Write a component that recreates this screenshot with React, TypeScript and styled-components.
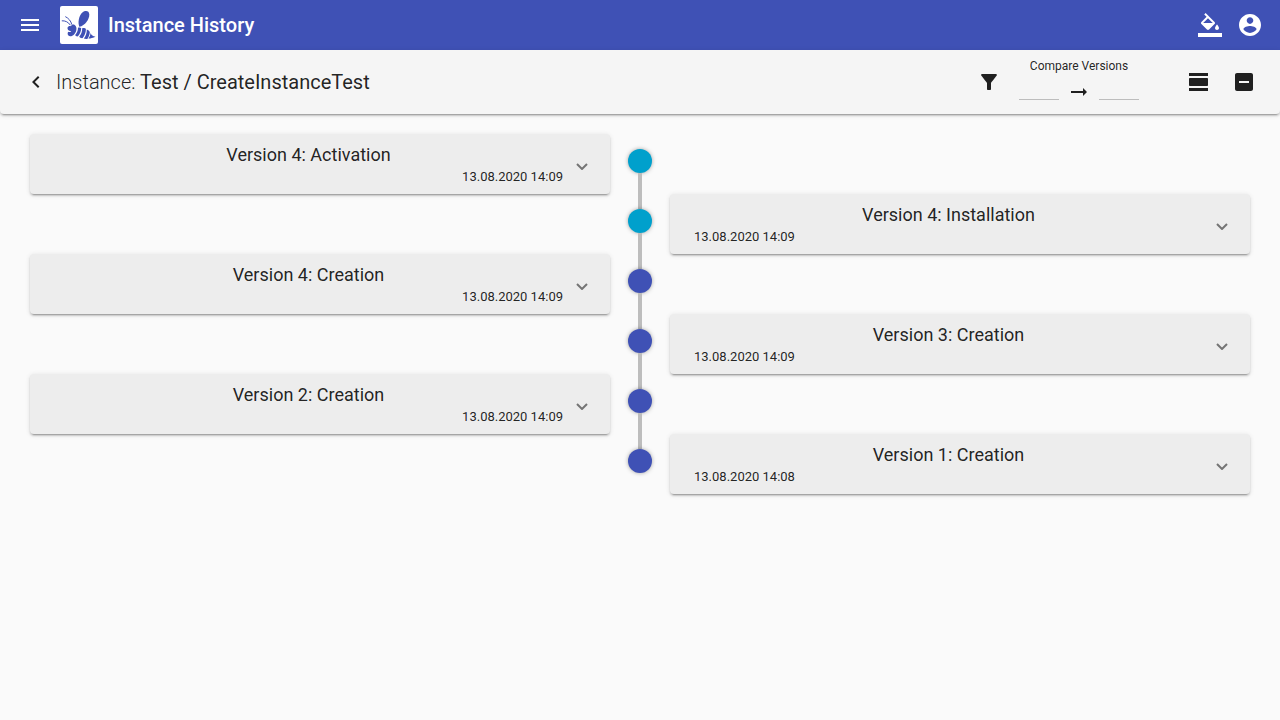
import React, { useState } from 'react';
import styled, { createGlobalStyle } from 'styled-components';

const GlobalStyle = createGlobalStyle`
  *, *::before, *::after { box-sizing: border-box; }
  body {
    margin: 0;
    background: #fafafa;
    color: rgba(0, 0, 0, 0.87);
    font-family: Roboto, "Liberation Sans", sans-serif;
  }
`;

const elevation = `0 3px 1px -2px rgba(0, 0, 0, 0.2), 0 2px 2px 0 rgba(0, 0, 0, 0.14),
    0 1px 5px 0 rgba(0, 0, 0, 0.12)`;

const AppBar = styled.header`
  display: flex;
  align-items: center;
  gap: 10px;
  height: 50px;
  padding: 0 10px;
  background: #3f51b5;
  color: #fff;
`;

const AppTitle = styled.h1`
  flex: 1;
  margin: 0;
  font-size: 20px;
  font-weight: 500;
  line-height: 24px;
`;

const Actions = styled.div`
  display: flex;
`;

const IconButton = styled.button`
  display: flex;
  align-items: center;
  justify-content: center;
  width: 40px;
  height: 40px;
  padding: 0;
  border: 0;
  border-radius: 50%;
  background: transparent;
  color: inherit;
  cursor: pointer;
`;

const Glyph = styled.svg`
  display: block;
  width: 24px;
  height: 24px;
  fill: currentColor;
`;

const Logo = styled.svg`
  display: block;
  width: 38px;
  height: 38px;
  border-radius: 2px;
  background: #fff;
`;

const Toolbar = styled.div`
  display: flex;
  align-items: center;
  height: 64px;
  padding: 0 16px;
  border-radius: 0 0 4px 4px;
  background: #f5f5f5;
  box-shadow: ${elevation};
`;

const InstanceTitle = styled.h2`
  flex: 1;
  margin: 0;
  font-size: 20px;
  font-weight: 400;
  line-height: 32px;
`;

const Prefix = styled.span`
  font-weight: 300;
`;

const Compare = styled.fieldset`
  display: grid;
  grid-template-columns: repeat(3, 40px);
  align-items: start;
  margin: 0 40px 0 10px;
  padding: 0 0 2px;
  border: 0;
  min-width: 0;
`;

const CompareLabel = styled.legend`
  width: 100%;
  padding: 0;
  font-size: 12px;
  line-height: 16px;
  text-align: center;
`;

const VersionInput = styled.input`
  width: 40px;
  height: 26px;
  padding: 0;
  border: 0;
  border-bottom: 1px solid #bdbdbd;
  background: transparent;
  font: inherit;
  font-size: 14px;
  text-align: center;
`;

const ArrowCell = styled.span`
  display: flex;
  justify-content: center;
  padding-top: 6px;
`;

const ViewOptions = styled.div`
  display: flex;
  gap: 5px;
`;

const Timeline = styled.ol`
  margin: 0;
  padding: 20px 30px;
  list-style: none;
`;

const Row = styled.li`
  display: grid;
  grid-template-columns: 1fr 60px 1fr;
  align-items: start;
`;

const Rail = styled.div`
  display: flex;
  flex-direction: column;
  align-items: center;
  grid-column: 2;
  grid-row: 1;
  align-self: stretch;
  padding-top: 15px;
`;

const Dot = styled.span<{ $color: string }>`
  flex: none;
  width: 24px;
  height: 24px;
  border-radius: 50%;
  background: ${(p) => p.$color};
  box-shadow: 0 0 4px rgba(0, 0, 0, 0.35);
`;

const Connector = styled.span`
  flex: 1;
  width: 4px;
  margin-bottom: -15px;
  background: #bdbdbd;
`;

const Card = styled.article<{ $side: Side }>`
  grid-column: ${(p) => (p.$side === 'left' ? 1 : 3)};
  grid-row: 1;
  border-radius: 4px;
  background: #ededed;
  box-shadow: ${elevation};
`;

const CardHeader = styled.button`
  display: flex;
  align-items: center;
  gap: 13px;
  width: 100%;
  padding: 10px 22px 6px 24px;
  border: 0;
  background: transparent;
  color: inherit;
  font: inherit;
  cursor: pointer;
`;

const CardText = styled.span`
  display: flex;
  flex: 1;
  flex-direction: column;
  line-height: 22px;
`;

const CardTitle = styled.span`
  font-size: 18px;
  text-align: center;
`;

const CardDate = styled.time<{ $side: Side }>`
  font-size: 13px;
  text-align: ${(p) => (p.$side === 'left' ? 'right' : 'left')};
`;

const Chevron = styled.svg<{ $open: boolean }>`
  width: 12px;
  height: 8px;
  fill: none;
  stroke: #757575;
  stroke-width: 2;
  transform: ${(p) => (p.$open ? 'rotate(180deg)' : 'none')};
`;

const CardBody = styled.p`
  margin: 0;
  padding: 0 24px 16px;
  font-size: 14px;
  line-height: 20px;
`;

type Side = 'left' | 'right';

interface Entry {
  version: number;
  kind: 'Activation' | 'Installation' | 'Creation';
  date: string;
}

const entries: Entry[] = [
  { version: 4, kind: 'Activation', date: '13.08.2020 14:09' },
  { version: 4, kind: 'Installation', date: '13.08.2020 14:09' },
  { version: 4, kind: 'Creation', date: '13.08.2020 14:09' },
  { version: 3, kind: 'Creation', date: '13.08.2020 14:09' },
  { version: 2, kind: 'Creation', date: '13.08.2020 14:09' },
  { version: 1, kind: 'Creation', date: '13.08.2020 14:08' },
];

const icons = {
  menu: 'M3 18h18v-2H3v2zm0-5h18v-2H3v2zm0-7v2h18V6H3z',
  fill: 'M16.56 8.94L7.62 0 6.21 1.41l2.38 2.38-5.15 5.15c-.59.59-.59 1.54 0 2.12l5.5 5.5c.29.29.68.44 1.06.44s.77-.15 1.06-.44l5.5-5.5c.59-.58.59-1.53 0-2.12zM5.21 10L10 5.21 14.79 10H5.21zM19 11.5s-2 2.17-2 3.5c0 1.1.9 2 2 2s2-.9 2-2c0-1.33-2-3.5-2-3.5zM0 20h24v4H0z',
  account:
    'M12 1C5.930 1 1 5.930 1 12s4.930 11 11 11 11-4.930 11-11S18.070 1 12 1zm0 3.300c1.830 0 3.300 1.470 3.300 3.300s-1.470 3.300-3.300 3.300-3.300-1.470-3.300-3.300 1.470-3.300 3.300-3.300zm0 15.600c-2.750 0-5.180-1.410-6.600-3.540.030-2.190 4.400-3.390 6.600-3.390s6.570 1.200 6.600 3.390c-1.420 2.130-3.850 3.540-6.600 3.540z',
  back: 'M15.41 7.41L14 6l-6 6 6 6 1.41-1.41L10.83 12z',
  filter:
    'M4.25 5.61C6.27 8.2 10 13 10 13v6c0 .55.45 1 1 1h2c.55 0 1-.45 1-1v-6s3.72-4.8 5.74-7.39c.51-.66.04-1.61-.79-1.61H5.04c-.83 0-1.3.95-.79 1.61z',
  arrow: 'M16.01 11H4v2h12.01v3L20 12l-3.99-4z',
  viewDay:
    'M2 21h19v-3H2v3zM20 8H3c-.55 0-1 .45-1 1v6c0 .55.45 1 1 1h17c.55 0 1-.45 1-1V9c0-.55-.45-1-1-1zM2 3v3h19V3H2z',
  collapse:
    'M19 3H5c-1.1 0-2 .9-2 2v14c0 1.1.9 2 2 2h14c1.1 0 2-.9 2-2V5c0-1.1-.9-2-2-2zm-2 10H7v-2h10v2z',
};

function Icon({ name }: { name: keyof typeof icons }) {
  return (
    <Glyph viewBox="0 0 24 24" aria-hidden="true">
      <path d={icons[name]} />
    </Glyph>
  );
}

function BeeLogo() {
  return (
    <Logo viewBox="0 0 38 38" role="img" aria-label="Bee">
      <g fill="#3f51b5">
        <path d="M19.3 20.7C17.6 16.500 18.800 9.500 22.400 6.400C25.500 3.900 29.200 4.600 29.300 8.400C29.400 13.400 25 19.500 19.300 20.700Z" />
        <path d="M7.500 21.800C8 20.300 9.500 19.800 11 20.200C11.500 18.600 13.200 18.200 14.700 19C16.300 20 16.800 22 16.300 24.200C15.600 27.400 13.200 30.300 10.200 30.300C7.900 30 7 27.900 8.200 25.800C9.500 26.400 10.900 26 11.200 24.900C9 25.200 7.200 23.800 7.500 21.800Z" />
        <path d="M18 21.800C19.300 21.300 20.700 21.600 21.200 22.200C21.100 25 19.900 28.200 18 30.300C16.800 30.700 15.400 29.900 15.200 29C17.100 26.900 18 24.400 18 21.800Z" />
        <path d="M22.200 22.200C23.900 21.700 25.300 22.300 25.900 23C25.900 26.200 24.800 29.700 22.700 32.100C21.100 32.300 19.700 31.500 19.200 30.800C21.300 28.200 22.300 25.300 22.200 22.200Z" />
        <path d="M26.800 23.600C28.200 24 29.400 25.200 29.800 26.200C29.700 28.600 28.700 31.200 27.300 33C26.100 33.200 24.700 33 23.900 32.600C25.900 30 26.900 27.100 26.800 23.600Z" />
        <path d="M30.500 27C31.300 29.100 33.100 30.200 35.500 30.700C33.200 31.600 30.700 32.500 28.400 32.600C29.600 31 30.400 29.200 30.500 27Z" />
      </g>
      <path
        d="M1.800 14.800C5.200 14.600 8.200 15.900 10.400 19.200M5.300 10.600C8.600 12.300 10.900 14.800 11.800 18.600"
        fill="none"
        stroke="#3f51b5"
        strokeWidth="1"
      />
    </Logo>
  );
}

function HistoryCard({ entry, side }: { entry: Entry; side: Side }) {
  const [open, setOpen] = useState(false);
  return (
    <Card $side={side}>
      <CardHeader type="button" aria-expanded={open} onClick={() => setOpen(!open)}>
        <CardText>
          <CardTitle>
            Version {entry.version}: {entry.kind}
          </CardTitle>
          <CardDate $side={side}>{entry.date}</CardDate>
        </CardText>
        <Chevron $open={open} viewBox="0 0 12 8" aria-hidden="true">
          <path d="M1 2L6 7L11 2" />
        </Chevron>
      </CardHeader>
      {open && <CardBody>{entry.kind} of version {entry.version}</CardBody>}
    </Card>
  );
}

export default function App() {
  return (
    <>
      <GlobalStyle />
      <AppBar>
        <IconButton type="button" aria-label="Menu">
          <Icon name="menu" />
        </IconButton>
        <BeeLogo />
        <AppTitle>Instance History</AppTitle>
        <Actions>
          <IconButton type="button" aria-label="Theme">
            <Icon name="fill" />
          </IconButton>
          <IconButton type="button" aria-label="Account">
            <Icon name="account" />
          </IconButton>
        </Actions>
      </AppBar>
      <Toolbar>
        <IconButton type="button" aria-label="Back">
          <Icon name="back" />
        </IconButton>
        <InstanceTitle>
          <Prefix>Instance:</Prefix> Test / CreateInstanceTest
        </InstanceTitle>
        <IconButton type="button" aria-label="Filter">
          <Icon name="filter" />
        </IconButton>
        <Compare>
          <CompareLabel>Compare Versions</CompareLabel>
          <VersionInput type="text" aria-label="From version" />
          <ArrowCell>
            <Icon name="arrow" />
          </ArrowCell>
          <VersionInput type="text" aria-label="To version" />
        </Compare>
        <ViewOptions>
          <IconButton type="button" aria-label="Accordion mode">
            <Icon name="viewDay" />
          </IconButton>
          <IconButton type="button" aria-label="Collapse all">
            <Icon name="collapse" />
          </IconButton>
        </ViewOptions>
      </Toolbar>
      <main>
        <Timeline>
          {entries.map((entry, i) => (
            <Row key={i}>
              <Rail>
                <Dot $color={entry.kind === 'Creation' ? '#3f51b5' : '#00a0cc'} />
                {i < entries.length - 1 && <Connector />}
              </Rail>
              <HistoryCard entry={entry} side={i % 2 === 0 ? 'left' : 'right'} />
            </Row>
          ))}
        </Timeline>
      </main>
    </>
  );
}
